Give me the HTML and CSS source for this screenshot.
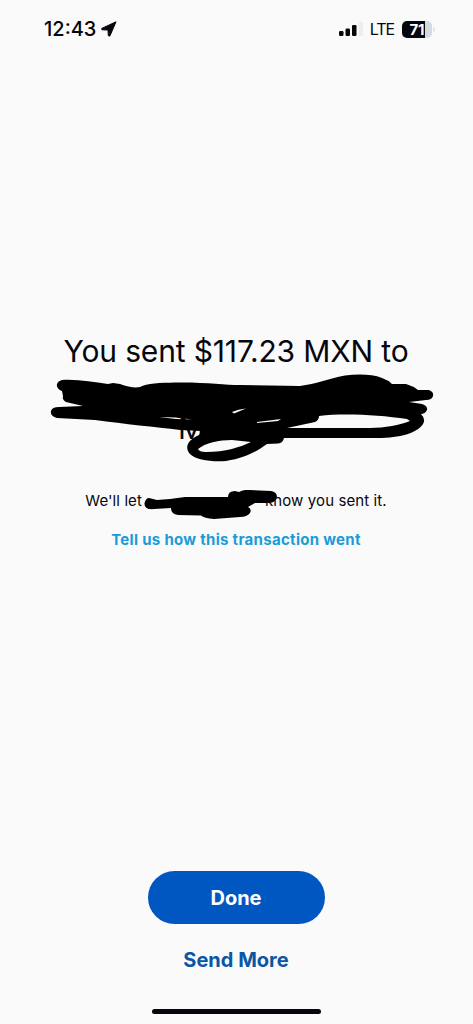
FILE: index.html
```html
<!DOCTYPE html>
<html lang="en">
<head>
    <meta charset="UTF-8">
    <meta name="viewport" content="width=device-width, initial-scale=1.0">
    <title>Payment Sent</title>
    <link rel="stylesheet" href="styles.css">
</head>
<body>
    <!-- Status Bar -->
    <header class="status-bar">
        <div class="clock">
            <span class="time">12:43</span>
            <svg class="location" width="16" height="16" viewBox="0 0 16 16">
                <path d="M15 .8 L.8 7.4 Q.2 8.6 1.2 8.8 L7 9 L7.3 14.6 Q8 15.8 9 14.8 Z" fill="#05070d" stroke="#05070d" stroke-width="1" stroke-linejoin="round"/>
            </svg>
        </div>
        <div class="signal">
            <svg width="24" height="14" viewBox="0 0 24 14">
                <rect x="0" y="9" width="4.5" height="5" rx="1.3" fill="#05070d"/>
                <rect x="6.5" y="6.500" width="4.500" height="7.500" rx="1.3" fill="#05070d"/>
                <rect x="13" y="3" width="4.500" height="11" rx="1.3" fill="#05070d"/>
                <rect x="20" y="0" width="4" height="14" rx="1.3" fill="#eceef0"/>
            </svg>
            <span class="network">LTE</span>
            <div class="battery">71</div>
            <span class="battery-cap"></span>
        </div>
    </header>

    <!-- Confirmation Message -->
    <main class="message">
        <h1>You sent $117.23 MXN to</h1>
        <svg class="recipient" width="385" height="92" viewBox="50 372 385 92">
            <text class="initial" x="178" y="439">M</text>
            <path fill="#000" fill-rule="evenodd" d="M62 380 C78 379 92 382 108 384 L113 383 L120 384 C128 387 135 388 140 387 C147 383 160 383 175 382.500 C205 382 225 385 240 385 L300 386 C316 384 328 379 345 375.500 C358 374 372 374 382 378 Q388 380 392 384 L406 384 Q413 386 418 390 L429 390 Q434 392 433 396 Q432 400 426 400 L409 402 L422 404 Q428 406 427 410 Q425 414 421 414 Q426 419 423 424 C417 433 400 438 378 438 L284 438 Q283 443 278 443.500 L267 444 C257 451 246 458 226 461 C211 462 196 460 190 454 C184 447 188 440 199 435 L201 431 L180 430 C155 427 125 424 95 420 L76 419 L57 418 Q50 416 51 411 Q52 407 59 407 L83 406 L66 402 Q62 400 63 396 L62 391 Q56 389 57 384 Q58 381 62 380 Z
                M198 449 C205 443 219 440 232 440 L251 442 C241 447 225 452 206 452 Q199 452 198 449 Z
                M287 428 L315 422 Q319 420 319 416 C344 413 379 415 407 419 L410 421 C400 425 385 428 370 428 Z
                M159 417 L175 417.500 L192 419.500 L176 419 Z
                M232 412 Q238 409 246 408.500 L234 413.500 Z
                M257 422 L281 419 L278 421 L257 423 Z"/>
        </svg>
        <p class="notice">
            <span>We'll let</span>
            <svg class="name" width="134" height="30" viewBox="144 490 134 30">
                <path fill="#000" d="M149 498 L157 500 L170 499 L185 497 L228 497 Q228 491 235 491 L239 492 Q243 489.500 249 490 L271 491 Q277 492 277 497 Q276 502 270 503 L255 503 L248 507 Q252 509 250 513 Q247 517 240 517 L214 519 Q204 518 201 515.500 L178 515 Q171 514 171 508 L154 509 Q144 510 144.500 503 Q146 498 149 498 Z"/>
            </svg>
            <span class="know">know you sent it.</span>
        </p>
        <a class="feedback" href="#">Tell us how this transaction went</a>
    </main>

    <!-- Bottom Actions -->
    <footer class="actions">
        <button class="done">Done</button>
        <a class="send-more" href="#">Send More</a>
        <div class="home-bar"></div>
    </footer>
</body>
</html>
```

FILE: styles.css
```css
/* General body styles */
* {
    box-sizing: border-box;
}

body {
    margin: 0;
    height: 1024px;
    display: flex;
    flex-direction: column;
    font-family: 'Inter', 'Liberation Sans', sans-serif;
    background-color: #fafafb;
    color: #05070d;
    overflow: hidden;
}

a {
    text-decoration: none;
}

/* Status bar */
.status-bar {
    height: 58px;
    padding: 0 38px 0 44px;
    display: flex;
    justify-content: space-between;
    align-items: center;
}

.clock {
    display: flex;
    align-items: center;
    gap: 5px;
}

.time {
    font-size: 20px;
    font-weight: 500;
}

.signal {
    display: flex;
    align-items: center;
}

.network {
    margin-left: 7px;
    font-size: 16px;
    letter-spacing: -1.1px;
}

.battery {
    width: 30px;
    height: 17px;
    margin-left: 8px;
    border-radius: 5px;
    background: linear-gradient(to right, #05070d 23px, #d5dbe3 23px);
    color: #fff;
    font-size: 15px;
    font-weight: 700;
    line-height: 17px;
    text-align: center;
}

.battery-cap {
    width: 2px;
    height: 5px;
    margin-left: 1px;
    border-radius: 0 2px 2px 0;
    background-color: #dfe3e8;
}

/* Confirmation message */
.message {
    flex: 1;
    padding: 273px 1px 0 0;
    display: flex;
    flex-direction: column;
    align-items: center;
}

h1 {
    margin: 0;
    font-size: 30px;
    font-weight: 400;
    line-height: 40px;
    letter-spacing: -0.15px;
}

.recipient {
    margin: 1px 0 0 12px;
    flex-shrink: 0;
}

.initial {
    font-size: 30px;
    fill: #05070d;
}

.notice {
    margin: 26px 0 0;
    height: 30px;
    display: flex;
    align-items: flex-start;
    font-size: 15px;
    line-height: 22px;
    white-space: nowrap;
}

.notice span {
    letter-spacing: 0.1px;
}

.name {
    margin-left: 2px;
}

/* The scribble runs over the first letter */
.know {
    margin-left: -13px;
}

.feedback {
    margin-top: 9px;
    color: #1b9bd7;
    font-size: 15px;
    font-weight: 700;
    line-height: 22px;
    letter-spacing: 0.3px;
}

/* Bottom actions */
.actions {
    height: 153px;
    padding-right: 1px;
    display: flex;
    flex-direction: column;
    align-items: center;
}

.done {
    width: 177px;
    height: 53px;
    border: none;
    border-radius: 27px;
    background-color: #0057c2;
    color: #fff;
    font-family: inherit;
    font-size: 20px;
    font-weight: 700;
}

.send-more {
    margin-top: 22px;
    color: #0956a5;
    font-size: 20px;
    font-weight: 700;
    line-height: 28px;
}

.home-bar {
    width: 169px;
    height: 5px;
    margin-top: 35px;
    border-radius: 3px;
    background-color: #05070d;
}
```
